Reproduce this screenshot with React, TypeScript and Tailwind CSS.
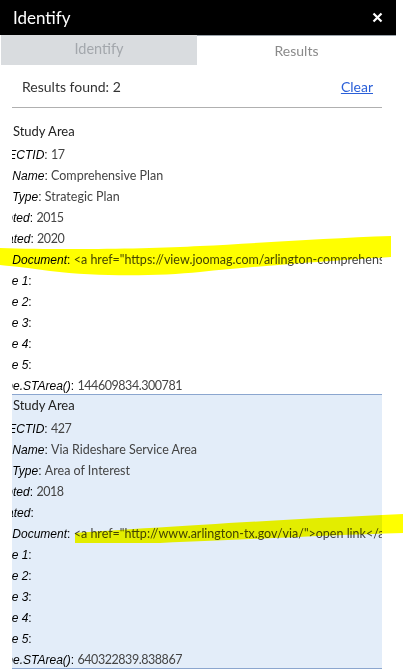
import React from "react";

type Row = { label?: string; value?: string; title?: string };

const block1: Row[] = [
  { title: "Plan Study Area" },
  { label: "OBJECTID", value: "17" },
  { label: "Plan Name", value: "Comprehensive Plan" },
  { label: "Plan Type", value: "Strategic Plan" },
  { label: "Adopted", value: "2015" },
  { label: "Updated", value: "2020" },
  {
    label: "Plan Document",
    value: '<a href="https://view.joomag.com/arlington-comprehensive-plan/0123456789">open link</a>',
  },
  { label: "Image 1", value: "" },
  { label: "Image 2", value: "" },
  { label: "Image 3", value: "" },
  { label: "Image 4", value: "" },
  { label: "Image 5", value: "" },
  { label: "Shape.STArea()", value: "144609834.300781" },
];

const block2: Row[] = [
  { title: "Plan Study Area" },
  { label: "OBJECTID", value: "427" },
  { label: "Plan Name", value: "Via Rideshare Service Area" },
  { label: "Plan Type", value: "Area of Interest" },
  { label: "Adopted", value: "2018" },
  { label: "Updated", value: "" },
  { label: "Plan Document", value: '<a href="http://www.arlington-tx.gov/via/">open link</a>' },
  { label: "Image 1", value: "" },
  { label: "Image 2", value: "" },
  { label: "Image 3", value: "" },
  { label: "Image 4", value: "" },
  { label: "Image 5", value: "" },
  { label: "Shape.STArea()", value: "640322839.838867" },
];

const sans = "font-['Lato','Noto_Sans',sans-serif]";

function Value({ v }: { v?: string }) {
  const numeric = !!v && /^[0-9.]+$/.test(v);
  return (
    <span
      className={
        numeric
          ? `${sans} text-[12.5px] tracking-[-0.45px] text-[#444]`
          : `${sans} text-[12.5px] text-[#444]`
      }
    >
      {v}
    </span>
  );
}

function Block({ rows, selected }: { rows: Row[]; selected?: boolean }) {
  return (
    <div
      className={`w-[370px] overflow-hidden border-b border-[#8ba6cf] ${
        selected ? "bg-[#e3edf9]" : "bg-white"
      }`}
    >
      <div className="ml-[-27px] whitespace-nowrap">
        {rows.map((r, i) =>
          r.title ? (
            <div key={i} className={`h-[21px] leading-[21px] text-[13px] text-[#222] ${sans}`}>
              {r.title}
            </div>
          ) : (
            <div key={i} className="h-[21px] leading-[21px]">
              <span className="font-['Liberation_Sans',Arial,sans-serif] italic text-[12px] text-black">
                {r.label}
              </span>
              <span className="font-['Liberation_Sans',Arial,sans-serif] text-[12px] text-black">: </span>
              <Value v={r.value} />
            </div>
          )
        )}
      </div>
    </div>
  );
}

export default function App() {
  return (
    <div className={`relative w-[403px] h-[672px] overflow-hidden bg-white ${sans}`}>
      <div className="w-[396px]">
        <div className="h-[35px] bg-black flex items-center justify-between pl-[13px] pr-[12px]">
          <span className="text-white text-[17px] leading-none">Identify</span>
          <svg width="11" height="11" viewBox="0 0 11 11" className="mr-[1px]">
            <path d="M1.5 1.5 L9.5 9.5 M9.5 1.5 L1.5 9.5" stroke="white" strokeWidth="2.2" />
          </svg>
        </div>
        <div className="flex h-[30px]">
          <div className="w-[197px] pl-[1px] bg-white">
            <div className="h-full bg-[#d9dcdf] flex items-center justify-center text-[14.5px] text-[#a3a7ac] pb-[3px]">
              Identify
            </div>
          </div>
          <div className="flex-1 border-t-[1.5px] border-[#9aa3ab] bg-white flex items-center justify-center text-[14px] text-[#8a8a8a]">
            Results
          </div>
        </div>
      </div>

      <div className="px-3">
        <div className="w-[370px] h-[43px] flex items-center justify-between pl-[10px] pr-[9px] pt-[1px] border-b border-[#b0b0b0]">
          <span className="text-[14px] text-[#333]">Results found: 2</span>
          <span className="text-[14px] text-[#2a5fd8] underline">Clear</span>
        </div>
        <div className="mt-[13px]">
          <Block rows={block1} />
          <Block rows={block2} selected />
        </div>
      </div>

      <svg
        className="absolute inset-0 pointer-events-none mix-blend-multiply"
        width="403"
        height="672"
        viewBox="0 0 403 672"
      >
        <path
          d="M0,248 C60,250 150,249 200,246 C260,243 330,238 391,236 L391,257 C340,260 260,266 200,272 C160,276 100,277 50,271 C30,268 10,266 0,265 Z"
          fill="#ffff00"
        />
        <path
          d="M75,533 C150,528 250,521 403,514 L403,533 C330,535 260,539 160,543 L75,543 Z"
          fill="#ffff00"
        />
      </svg>
    </div>
  );
}
